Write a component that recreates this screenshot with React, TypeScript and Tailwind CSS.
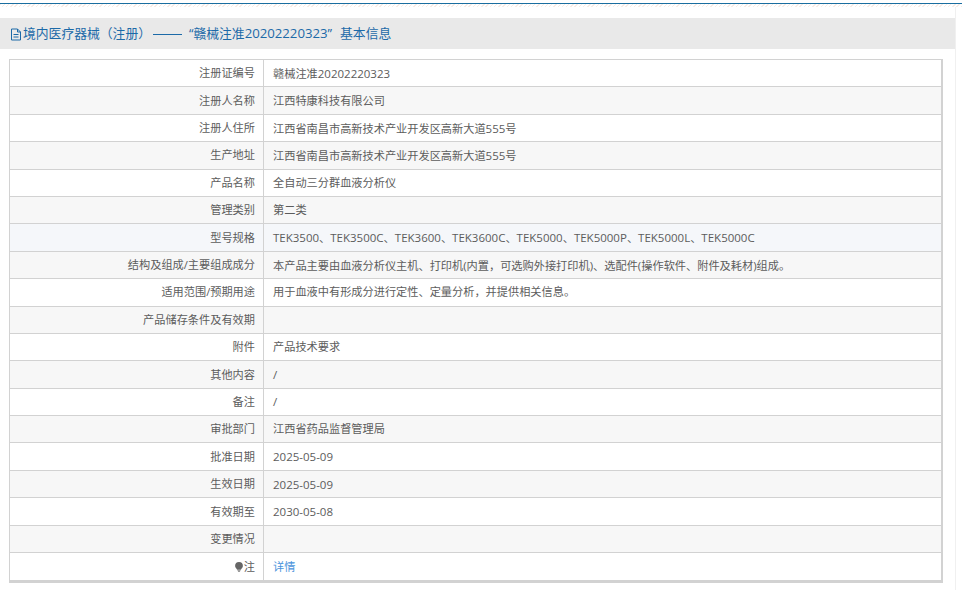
const rows: [string, string][] = [
  ["注册证编号", "赣械注准20202220323"],
  ["注册人名称", "江西特康科技有限公司"],
  ["注册人住所", "江西省南昌市高新技术产业开发区高新大道555号"],
  ["生产地址", "江西省南昌市高新技术产业开发区高新大道555号"],
  ["产品名称", "全自动三分群血液分析仪"],
  ["管理类别", "第二类"],
  ["型号规格", "TEK3500、TEK3500C、TEK3600、TEK3600C、TEK5000、TEK5000P、TEK5000L、TEK5000C"],
  ["结构及组成/主要组成成分", "本产品主要由血液分析仪主机、打印机(内置，可选购外接打印机)、选配件(操作软件、附件及耗材)组成。"],
  ["适用范围/预期用途", "用于血液中有形成分进行定性、定量分析，并提供相关信息。"],
  ["产品储存条件及有效期", ""],
  ["附件", "产品技术要求"],
  ["其他内容", "/"],
  ["备注", "/"],
  ["审批部门", "江西省药品监督管理局"],
  ["批准日期", "2025-05-09"],
  ["生效日期", "2025-05-09"],
  ["有效期至", "2030-05-08"],
  ["变更情况", ""],
];

function rowBg(i: number) {
  if (i === 6) return "bg-[#f5f7fa]";
  return i % 2 === 1 ? "bg-[#f7f7f7]" : "bg-white";
}

function Mixed({ text }: { text: string }) {
  return (
    <span>
      {text.split(/([\x20-\x7e]+)/).map((part, i) =>
        i % 2 === 1 ? <span key={i} className="text-[11.5px]">{part}</span> : <span key={i}>{part}</span>
      )}
    </span>
  );
}

function Row({ label, children, bg, last }: { label: React.ReactNode; children?: React.ReactNode; bg: string; last?: boolean }) {
  return (
    <div className={`flex h-[27.4px] ${bg} ${last ? "" : "border-b border-[#d2d2d2]"}`}>
      <div className="w-[254px] shrink-0 flex items-center justify-end pr-2 pt-px text-right border-r border-[#d2d2d2]">{label}</div>
      <div className="flex-1 flex items-center pl-[9px] pt-px whitespace-nowrap [text-spacing-trim:space-all]">{children}</div>
    </div>
  );
}

export default function App() {
  return (
    <div className="relative w-[962px] h-[590px] overflow-hidden bg-white text-[11.2px] text-[#5c5c5c] font-['Open_Sans','Noto_Sans_CJK_SC',sans-serif]">
      <div className="h-[3px] bg-white" />
      <div className="h-px bg-[#1a6ea0]" />
      <div className="h-[3px] bg-[repeating-linear-gradient(135deg,#f7ece7_0,#f7ece7_1px,#ffffff_1px,#ffffff_3px)]" />
      <div className="w-[956px] border-r border-[#f0f0f0] pt-[11px] h-[583px]">
        <div className="h-[31px] bg-[#e9e9e9] flex items-center pl-[10px] pt-px text-[12.8px] text-[#1c6aa8] whitespace-nowrap [text-spacing-trim:space-all]">
          <svg width="12" height="13" viewBox="0 0 12 13" fill="none" stroke="#1c6aa8" strokeWidth="1" className="mr-px shrink-0">
            <path d="M1.5 1h6l3 3v8h-9z" />
            <path d="M7.5 1v3h3M3.5 6.5h5M3.5 9h5" />
          </svg>
          <span>境内医疗器械（注册）</span>
          <span className="ml-[2px] w-[29px] h-px bg-[#1c6aa8] shrink-0" />
          <span className="ml-[7px]">“赣械注准<span className="text-[13.2px]">20202220323</span>”</span>
          <span className="ml-[8px]">基本信息</span>
        </div>
        <div className="ml-[9px] mt-[10px] w-[934px] border border-[#d2d2d2] border-b-[3px] border-r-2">
          {rows.map(([l, v], i) => (
            <Row key={l} label={l} bg={rowBg(i)}><Mixed text={v} /></Row>
          ))}
          <Row
            last
            bg="bg-white"
            label={
              <span className="flex items-center">
                <svg width="8" height="10" viewBox="0 0 8 10" className="mr-px">
                  <path d="M4 0a3.9 3.9 0 0 1 3.9 3.9c0 1.6-1.4 2.4-2 3.8H2.1c-.6-1.4-2-2.2-2-3.8A3.9 3.9 0 0 1 4 0z" fill="#666" />
                  <path d="M2.5 8.6h3M3 9.6h2" stroke="#777" strokeWidth="0.8" />
                </svg>
                注
              </span>
            }
          >
            <span className="text-[#4a94dc] text-[11.2px] pt-px">详情</span>
          </Row>
        </div>
      </div>
    </div>
  );
}
